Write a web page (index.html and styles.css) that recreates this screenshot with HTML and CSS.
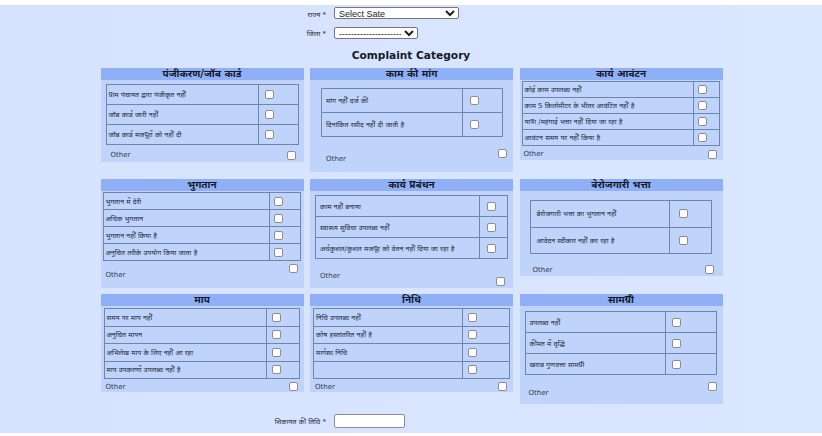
FILE: index.html
```html
<!DOCTYPE html>
<html lang="hi">

<head>
  <meta charset="UTF-8" />
  <title>Complaint Category</title>
  <link rel="stylesheet" href="styles.css">
</head>

<body>
  <div class="page">
    <div class="field field-state">
      <label>राज्य *</label>
      <select class="select-state"><option>Select Sate</option></select>
    </div>
    <div class="field field-district">
      <label>जिला *</label>
      <select class="select-district"><option>------------------------</option></select>
    </div>

    <h2>Complaint Category</h2>

    <div class="categories">
      <div class="panel reg">
        <h3>पंजीकरण/जॉब कार्ड</h3>
        <table>
          <tr><td class="label">ग्राम पंचायत द्वारा पंजीकृत नहीं</td><td class="check"><input type="checkbox"></td></tr>
          <tr><td class="label">जॉब कार्ड जारी नहीं</td><td class="check"><input type="checkbox"></td></tr>
          <tr><td class="label">जॉब कार्ड मजदूरों को नहीं दी</td><td class="check"><input type="checkbox"></td></tr>
        </table>
        <div class="other"><span>Other</span><input type="checkbox"></div>
      </div>

      <div class="panel demand">
        <h3>काम की मांग</h3>
        <table>
          <tr><td class="label">मांग नहीं दर्ज की</td><td class="check"><input type="checkbox"></td></tr>
          <tr><td class="label">दिनांकित रसीद नहीं दी जाती है</td><td class="check"><input type="checkbox"></td></tr>
        </table>
        <div class="other"><span>Other</span><input type="checkbox"></div>
      </div>

      <div class="panel alloc">
        <h3>कार्य आवंटन</h3>
        <table>
          <tr><td class="label">कोई काम उपलब्ध नहीं</td><td class="check"><input type="checkbox"></td></tr>
          <tr><td class="label">काम 5 किलोमीटर के भीतर आवंटित नहीं है</td><td class="check"><input type="checkbox"></td></tr>
          <tr><td class="label">यात्रा /महंगाई भत्ता नहीं दिया जा रहा है</td><td class="check"><input type="checkbox"></td></tr>
          <tr><td class="label">आवंटन समय पर नहीं किया है</td><td class="check"><input type="checkbox"></td></tr>
        </table>
        <div class="other"><span>Other</span><input type="checkbox"></div>
      </div>

      <div class="panel pay">
        <h3>भुगतान</h3>
        <table>
          <tr><td class="label">भुगतान में देरी</td><td class="check"><input type="checkbox"></td></tr>
          <tr><td class="label">अधिक भुगतान</td><td class="check"><input type="checkbox"></td></tr>
          <tr><td class="label">भुगतान नहीं किया है</td><td class="check"><input type="checkbox"></td></tr>
          <tr><td class="label">अनुचित तरीके उपयोग किया जाता है</td><td class="check"><input type="checkbox"></td></tr>
        </table>
        <div class="other"><span>Other</span><input type="checkbox"></div>
      </div>

      <div class="panel manage">
        <h3>कार्य प्रबंधन</h3>
        <table>
          <tr><td class="label">काम नहीं बनाया</td><td class="check"><input type="checkbox"></td></tr>
          <tr><td class="label">स्वास्थ्य सुविधा उपलब्ध नहीं</td><td class="check"><input type="checkbox"></td></tr>
          <tr><td class="label">अर्धकुशल/कुशल मजदूर को वेतन नहीं दिया जा रहा है</td><td class="check"><input type="checkbox"></td></tr>
        </table>
        <div class="other"><span>Other</span><input type="checkbox"></div>
      </div>

      <div class="panel allowance">
        <h3>बेरोजगारी भत्ता</h3>
        <table>
          <tr><td class="label">बेरोजगारी भत्ता का भुगतान नहीं</td><td class="check"><input type="checkbox"></td></tr>
          <tr><td class="label">आवेदन स्वीकार नहीं कर रहा है</td><td class="check"><input type="checkbox"></td></tr>
        </table>
        <div class="other"><span>Other</span><input type="checkbox"></div>
      </div>

      <div class="panel measure">
        <h3>माप</h3>
        <table>
          <tr><td class="label">समय पर माप नहीं</td><td class="check"><input type="checkbox"></td></tr>
          <tr><td class="label">अनुचित मापन</td><td class="check"><input type="checkbox"></td></tr>
          <tr><td class="label">अभिलेख माप के लिए नहीं आ रहा</td><td class="check"><input type="checkbox"></td></tr>
          <tr><td class="label">माप उपकरणों उपलब्ध नहीं है</td><td class="check"><input type="checkbox"></td></tr>
        </table>
        <div class="other"><span>Other</span><input type="checkbox"></div>
      </div>

      <div class="panel fund">
        <h3>निधि</h3>
        <table>
          <tr><td class="label">निधि उपलब्ध नहीं</td><td class="check"><input type="checkbox"></td></tr>
          <tr><td class="label">कोष हस्तांतरित नहीं है</td><td class="check"><input type="checkbox"></td></tr>
          <tr><td class="label">मार्गस्थ निधि</td><td class="check"><input type="checkbox"></td></tr>
          <tr><td class="label"></td><td class="check"><input type="checkbox"></td></tr>
        </table>
        <div class="other"><span>Other</span><input type="checkbox"></div>
      </div>

      <div class="panel material">
        <h3>सामग्री</h3>
        <table>
          <tr><td class="label">उपलब्ध नहीं</td><td class="check"><input type="checkbox"></td></tr>
          <tr><td class="label">कीमत में वृद्धि</td><td class="check"><input type="checkbox"></td></tr>
          <tr><td class="label">खराब गुणवत्ता सामग्री</td><td class="check"><input type="checkbox"></td></tr>
        </table>
        <div class="other"><span>Other</span><input type="checkbox"></div>
      </div>
    </div>

    <div class="field field-date">
      <label>शिकायत की तिथि *</label>
      <input class="date-input" type="text">
    </div>
  </div>
</body>

</html>
```

FILE: styles.css
```css
html,
body {
  margin: 0;
  padding: 0;
  background: #fff;
}

body {
  height: 436px;
  overflow: hidden;
  font-family: "DejaVu Sans", "Noto Sans", sans-serif;
  color: #222b3a;
}

.page {
  margin-top: 5px;
  height: 428px;
  background: linear-gradient(90deg, #d6e2ff, #dbe6ff);
  overflow: hidden;
}

/* top and bottom form rows */
.field {
  display: flex;
  align-items: center;
  gap: 8px;
  height: 12px;
}

.field label {
  width: 326px;
  text-align: right;
  font-size: 7px;
}

.field-state {
  margin-top: 3px;
}

.field-district {
  margin-top: 7px;
}

.field-date {
  margin-top: 0;
  height: 14px;
}

select {
  height: 12px;
  padding: 0;
  border: 1px solid #767676;
  border-radius: 2px;
  background: #fff;
  font-family: "Liberation Sans", Arial, sans-serif;
  font-size: 9px;
  color: #222;
}

.select-state {
  width: 125px;
  margin-top: -2px;
}

.select-district {
  width: 84px;
}

.date-input {
  box-sizing: border-box;
  width: 71px;
  height: 14px;
  padding: 0;
  border: 1px solid #8d8d8d;
  border-radius: 2px;
  background: #fff;
}

h2 {
  margin: 10px 0 7px;
  height: 12px;
  line-height: 12px;
  text-align: center;
  font-size: 10.6px;
  font-weight: bold;
  color: #141a28;
}

/* category grid */
.categories {
  display: grid;
  grid-template-columns: repeat(3, 203px);
  grid-template-rows: 111px 115px 120px;
  column-gap: 6.5px;
  align-items: start;
  margin-left: 100.5px;
}

.panel {
  background: #bfd3fb;
  overflow: hidden;
}

.panel h3 {
  margin: 0;
  height: 12px;
  line-height: 12px;
  background: #8fb0f6;
  text-align: center;
  font-size: 10px;
  font-weight: bold;
  color: #141a28;
}

.panel table {
  border-collapse: collapse;
  table-layout: fixed;
  font-size: 7px;
}

.panel td {
  padding: 0 0 0 2px;
  border: 1px solid #6e86a8;
}

input[type="checkbox"] {
  appearance: none;
  display: block;
  box-sizing: border-box;
  width: 9px;
  height: 9px;
  margin: 0;
  border: 1px solid #8d8d8d;
  border-radius: 2px;
  background: #fff;
}

.other {
  display: flex;
  justify-content: space-between;
  align-items: flex-start;
  font-size: 7px;
  line-height: 9px;
  color: #333c4c;
}

/* each panel sits its table a bit differently */
.reg { height: 94px; }
.reg table { width: 193px; margin: 4px 0 0 5px; }
.reg td { height: 19px; }
.reg .label { width: 149px; }
.reg .check { padding-left: 6px; }
.reg .other { margin: 6px 8px 0 10px; }

.demand { height: 104px; }
.demand table { width: 182px; margin: 8px 0 0 11px; }
.demand td { height: 23px; }
.demand .label { width: 136px; padding-left: 4px; }
.demand .check { padding-left: 7px; }
.demand .other { margin: 12px 6px 0 16px; }
.demand .other span { margin-top: 6px; }

.alloc { height: 92px; }
.alloc table { width: 198px; margin: 1px 0 0 2px; }
.alloc td { height: 15px; }
.alloc .label { width: 168px; }
.alloc .check { padding-left: 4px; }
.alloc .other { margin: 4px 6px 0 4px; }

.pay { height: 109px; }
.pay table { width: 198px; margin: 1px 0 0 2px; }
.pay td { height: 16px; }
.pay .label { width: 163px; }
.pay .check { padding-left: 4px; }
.pay .other { margin: 3px 6px 0 5px; }
.pay .other span { margin-top: 7px; }

.manage { height: 109px; }
.manage table { width: 193px; margin: 4px 0 0 5px; }
.manage td { height: 20px; }
.manage .label { width: 159px; padding-left: 4px; }
.manage .check { padding-left: 7px; }
.manage .other { margin: 18px 8px 0 10px; }
.manage .other span { margin-top: -5px; }

.allowance { height: 97px; }
.allowance table { width: 182px; margin: 9px 0 0 10px; }
.allowance td { height: 25.5px; }
.allowance .label { width: 132px; padding-left: 6px; }
.allowance .check { padding-left: 9px; }
.allowance .other { margin: 11px 9px 0 13px; }
.allowance .other span { margin-top: 1px; }

.measure { height: 98px; }
.measure table { width: 196px; margin: 2px 0 0 3px; }
.measure td { height: 16.5px; }
.measure .label { width: 159px; }
.measure .check { padding-left: 5px; }
.measure .other { margin: 3px 6px 0 5px; }
.measure .other span { margin-top: 1px; }

.fund { height: 98px; }
.fund table { width: 197px; margin: 2px 0 0 3px; }
.fund td { height: 16.5px; }
.fund .label { width: 146px; }
.fund .check { padding-left: 5px; }
.fund .other { margin: 3px 6px 0 5px; }
.fund .other span { margin-top: 1px; }

.material { height: 110px; }
.material table { width: 192px; margin: 5px 0 0 5px; }
.material td { height: 20px; }
.material .label { width: 135px; padding-left: 4px; }
.material .check { padding-left: 6px; }
.material .other { margin: 7px 6px 0 9px; }
.material .other span { margin-top: 7px; }
```
